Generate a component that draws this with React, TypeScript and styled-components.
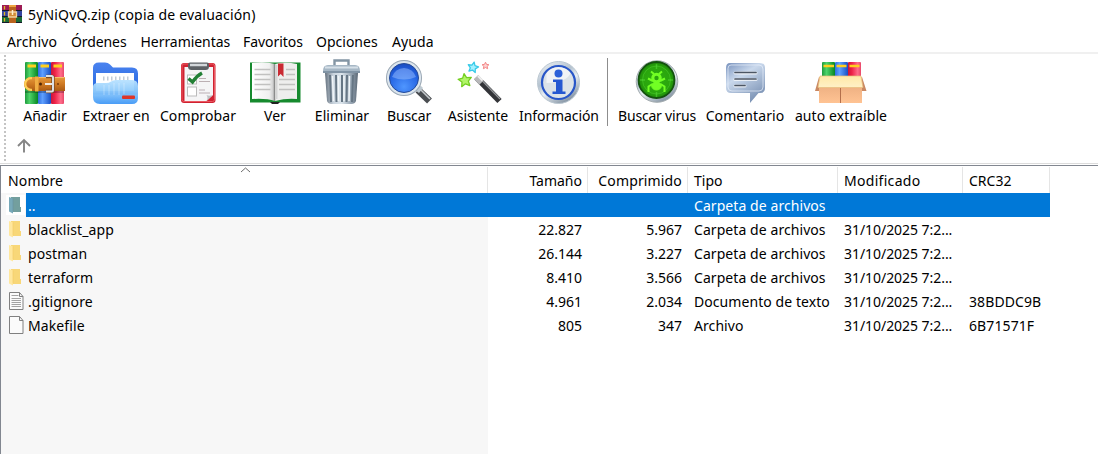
import React from 'react';
import styled, { createGlobalStyle } from 'styled-components';

const GlobalStyle = createGlobalStyle`
  * { box-sizing: border-box; }
  html, body { margin: 0; padding: 0; background: #fff; overflow: hidden; }
`;

const Window = styled.div`
  width: 1098px;
  height: 454px;
  display: flex;
  flex-direction: column;
  overflow: hidden;
  background: #fff;
  color: #000;
  font: 14px/20px 'Noto Sans', 'Open Sans', sans-serif;
  white-space: nowrap;
`;

const TitleBar = styled.header`
  flex: none;
  height: 30px;
  padding: 0 2px;
  display: flex;
  align-items: center;
  gap: 6px;
`;

const Title = styled.span`
  letter-spacing: 0.18px;
`;

const MenuBar = styled.nav`
  flex: none;
  height: 24px;
  padding: 2px 0 0 7px;
  display: flex;
  align-items: center;
  border-bottom: 2px solid #f0f0f0;
`;

const MenuItem = styled.span<{ $w: number; $track?: number }>`
  width: ${(p) => p.$w}px;
  letter-spacing: ${(p) => p.$track ?? 0}px;
`;

const ToolPanel = styled.div`
  flex: none;
  height: 109px;
  padding-left: 4px;
  display: flex;
`;

const Grip = styled.div`
  width: 2px;
  height: 107px;
  margin-top: 1px;
  background: repeating-linear-gradient(#c4c4c4 0 2px, #fff 2px 4px);
`;

const ToolRows = styled.div`
  display: flex;
  flex-direction: column;
  padding: 4px 0 0 6px;
`;

const ToolRow = styled.div`
  height: 70px;
  display: flex;
`;

const Tool = styled.div<{ $w: number; $track?: number }>`
  width: ${(p) => p.$w}px;
  display: flex;
  flex-direction: column;
  align-items: center;
  gap: 1px;
  padding-top: 1px;
  letter-spacing: ${(p) => p.$track ?? 0}px;
`;

const ToolIcon = styled.svg`
  width: 54px;
  height: 46px;
  flex: none;
  overflow: visible;
`;

const ToolSeparator = styled.div`
  width: 1px;
  height: 68px;
  margin: 0 4px 0 3px;
  background: #8d8d8d;
`;

const UpArrow = styled.svg`
  width: 16px;
  height: 16px;
  margin: 9px 0 0 4px;
`;

const ListPane = styled.main`
  flex: 1;
  display: flex;
  flex-direction: column;
  margin-top: 2px;
  border-top: 1px solid #828790;
  border-left: 1px solid #828790;
  box-shadow: 0 -1px 0 0 #fff, 0 -2px 0 0 #dcdcdc;
  background: linear-gradient(#f7f7f7, #f7f7f7) 0 27px / 487px 100% no-repeat;
`;

const columns = '486px 100px 100px 150px 125px 87px';

const HeadRow = styled.div`
  display: grid;
  grid-template-columns: ${columns};
  height: 27px;
  padding-top: 1px;
`;

const HeadCell = styled.div<{ $right?: boolean; $track?: number }>`
  position: relative;
  padding: ${(p) => (p.$right ? '4px 5px 0 0' : '4px 0 0 6px')};
  text-align: ${(p) => (p.$right ? 'right' : 'left')};
  border-right: 1px solid #e5e5e5;
  letter-spacing: ${(p) => p.$track ?? 0}px;
  &:first-child { width: 487px; padding-left: 7px; }
  &:nth-child(n + 2) { margin-left: 1px; margin-right: -1px; }
`;

const SortMark = styled.svg`
  position: absolute;
  top: 0;
  left: 239px;
  width: 11px;
  height: 6px;
`;

const Row = styled.div<{ $selected?: boolean }>`
  display: grid;
  grid-template-columns: ${columns};
  width: 1049px;
  height: 24px;
  align-items: center;
  color: ${(p) => (p.$selected ? '#fff' : '#000')};
  background: ${(p) =>
    p.$selected ? 'linear-gradient(#0078d7, #0078d7) 25px 0 no-repeat' : 'none'};
`;

const Cell = styled.span<{ $right?: boolean; $track?: number }>`
  height: 24px;
  padding: ${(p) => (p.$right ? '2px 6px 0 0' : '2px 0 0 7px')};
  margin-right: ${(p) => (p.$right ? -1 : 0)}px;
  text-align: ${(p) => (p.$right ? 'right' : 'left')};
  letter-spacing: ${(p) => p.$track ?? 0}px;
  line-height: 22px;
`;

const NameCell = styled.div`
  display: flex;
  align-items: center;
  gap: 3px;
  height: 24px;
  padding-left: 5px;
`;

const Name = styled.span`
  padding-top: 2px;
  letter-spacing: 0.1px;
`;

const FileIcon = styled.svg<{ $selected?: boolean }>`
  width: 19px;
  height: 20px;
  background: ${(p) => (p.$selected ? '#fff' : 'transparent')};
`;

const Gradients = () => (
  <defs>
    <linearGradient id="green"><stop offset="0" stopColor="#1e9a3c" /><stop offset=".35" stopColor="#4ed46a" /><stop offset="1" stopColor="#078522" /></linearGradient>
    <linearGradient id="blue"><stop offset="0" stopColor="#2f6ee0" /><stop offset=".35" stopColor="#5fa0ff" /><stop offset="1" stopColor="#174fc4" /></linearGradient>
    <linearGradient id="red"><stop offset="0" stopColor="#c9153a" /><stop offset=".3" stopColor="#ee2248" /><stop offset=".75" stopColor="#ff6d8a" /><stop offset="1" stopColor="#e84769" /></linearGradient>
    <linearGradient id="belt" x2="0" y2="1"><stop stopColor="#e69a3c" /><stop offset=".5" stopColor="#cf7a22" /><stop offset="1" stopColor="#ab5a12" /></linearGradient>
    <linearGradient id="folderBack" x2="0" y2="1"><stop stopColor="#4a83f0" /><stop offset="1" stopColor="#2465dc" /></linearGradient>
    <linearGradient id="folderFront" x2="0" y2="1"><stop stopColor="#b9e2ff" /><stop offset=".5" stopColor="#8ac8fb" /><stop offset="1" stopColor="#3f97f6" /></linearGradient>
    <linearGradient id="metal"><stop stopColor="#66727f" /><stop offset=".25" stopColor="#c8d3dd" /><stop offset=".5" stopColor="#dce5ec" /><stop offset=".8" stopColor="#94a3b1" /><stop offset="1" stopColor="#5b6875" /></linearGradient>
    <linearGradient id="silver" x2=".6" y2="1"><stop stopColor="#f4f8fb" /><stop offset=".45" stopColor="#b4c2cf" /><stop offset=".65" stopColor="#e9eff4" /><stop offset="1" stopColor="#8998a7" /></linearGradient>
    <linearGradient id="page" x2="1"><stop stopColor="#fff" /><stop offset=".75" stopColor="#f0f0f0" /><stop offset="1" stopColor="#bdbdbd" /></linearGradient>
    <radialGradient id="lens" cx=".5" cy=".75" r=".75"><stop stopColor="#4f96ff" /><stop offset=".6" stopColor="#2463e2" /><stop offset="1" stopColor="#1743b2" /></radialGradient>
    <linearGradient id="bubble" x2=".6" y2="1"><stop stopColor="#7892bd" /><stop offset=".4" stopColor="#c9d8ec" /><stop offset="1" stopColor="#7c93b5" /></linearGradient>
    <radialGradient id="radar"><stop stopColor="#2cb010" /><stop offset=".75" stopColor="#2aa50d" /><stop offset="1" stopColor="#1c8a08" /></radialGradient>
    <linearGradient id="flap" x2="0" y2="1"><stop stopColor="#ffe9a8" /><stop offset="1" stopColor="#fff0c6" /></linearGradient>
    <linearGradient id="carton" x2="0" y2="1"><stop stopColor="#e5a679" /><stop offset="1" stopColor="#ffc393" /></linearGradient>
  </defs>
);

const starPath = (cx: number, cy: number, r: number, turn = 0) =>
  Array.from({ length: 10 }, (_, i) => {
    const a = ((i * 36 - 90 + turn) * Math.PI) / 180;
    const d = i % 2 ? r * 0.48 : r;
    return `${i ? 'L' : 'M'}${(cx + d * Math.cos(a)).toFixed(2)} ${(cy + d * Math.sin(a)).toFixed(2)}`;
  }).join('') + 'Z';

const AddIcon = () => (
  <ToolIcon viewBox="0 0 54 46">
    <Gradients />
    <rect x="7" y="3" width="13" height="42" rx="1" fill="url(#green)" />
    <rect x="20" y="3" width="13" height="42" rx="1" fill="url(#blue)" />
    <rect x="33" y="3" width="13" height="42" rx="1" fill="url(#red)" />
    <path d="M9.500 7h8.500M22.500 7h8.500M35.500 7h8.500" stroke="#ffcf1e" strokeWidth="2.800" />
    <path d="M7 33h39" stroke="#000" strokeOpacity=".25" strokeWidth="2" />
    <path d="M13 18h34v14H13a7 7 0 0 1 0-14z" fill="url(#belt)" />
    <path d="M17 17.500h3.500v15H17z" fill="#f0ad42" />
    <path d="M14 19.200h-1a5.800 5.800 0 0 0 0 11.600h1" fill="none" stroke="#ffcf55" strokeWidth="2.200" />
    <path d="M21 18.500h7M37 18.500h9.500" stroke="#f8bc6b" strokeWidth="1" />
    <path d="M29 17.500h6q1 0 1 1v13q0 1-1 1h-6" transform="translate(-1)" fill="none" stroke="#7b4a24" strokeWidth="3.400" />
    <path d="M28 17h5.500q1.500 0 1.500 1.500v12.500q0 1.500-1.500 1.500H28" fill="none" stroke="#dcdfe2" strokeWidth="2" />
    <path d="M27 25h7" stroke="#f5f5f5" strokeWidth="1.800" />
    <circle cx="22.500" cy="25" r="1.500" fill="#512704" /><circle cx="40" cy="25" r="1" fill="#793a08" />
  </ToolIcon>
);

const ExtractIcon = () => (
  <ToolIcon viewBox="0 0 54 46">
    <path d="M4 9q0-5.500 6-5.500h6q3 0 5 2l3 3h19q6 0 6 6v21H4z" fill="url(#folderBack)" />
    <path d="M7 14h38v18H7z" fill="#fff" />
    <path d="M14 19.500h27" stroke="#c3ccd5" strokeWidth="4" strokeDasharray="1.500 2.500" />
    <path d="M4 28q0-4 5-4h8q3 0 5-1.500t5-1.500h16q6 0 6 6v12q0 6-6 6H11q-7 0-7-7z" fill="url(#folderFront)" fillOpacity=".95" />
    <path d="M15 26v10M20 26v10M25 24v12M30 24v12M35 24v11" stroke="#fff" strokeOpacity=".22" strokeWidth="1.500" />
    <rect x="33" y="36.500" width="13" height="3.500" rx="1" fill="#dd3528" />
  </ToolIcon>
);

const TestIcon = () => (
  <ToolIcon viewBox="0 0 54 46">
    <rect x="10" y="4" width="34.500" height="40" rx="3" fill="#cf2231" />
    <rect x="11" y="5" width="32.500" height="37.500" rx="2" fill="none" stroke="#eb5962" />
    <path d="M13.500 8H42v28l-6.500 6h-22z" fill="#f5f5f6" />
    <path d="M35.500 42q2-3 0-6 3 1.500 6.500 0z" fill="#bfc1c4" />
    <path d="M17 5.500q0-2 2-2h17q2 0 2 2v2q0 3.500-3.500 3.500h-14q-3.500 0-3.500-3.500z" fill="#5d6165" />
    <path d="M19 6h17" stroke="#d3d7da" strokeWidth="2.500" />
    <rect x="16.500" y="16" width="9" height="9" fill="#fff" stroke="#bbb" />
    <rect x="16.500" y="28" width="9" height="9" fill="#fff" stroke="#bbb" />
    <path d="M28 19.500h7M28 22.500h11M28 31h6M28 34h11" stroke="#bcb0b3" strokeWidth="1.200" />
    <path d="m17.500 19.500 4 3.500q4-6 9.500-9" fill="none" stroke="#238036" strokeWidth="3.300" />
  </ToolIcon>
);

const ViewIcon = () => (
  <ToolIcon viewBox="0 0 54 46">
    <path d="M2 3.500h50.500v40H31q-3 2-7 0H2z" fill="#168a2e" />
    <path d="M22 43h10l-2 2h-6z" fill="#222" />
    <path d="M4 4q13-2 23 1v37q-9-3-23-2z" fill="url(#page)" />
    <path d="M49 5q-12-2.500-22 0v37q11-3 22-2z" fill="#eeeeed" />
    <path d="M26.500 5v37" stroke="#8b8b8b" strokeWidth="1.500" /><path d="M28.500 6v34" stroke="#d4d4d4" strokeWidth="2" />
    <path d="M6.500 10.500h16M6.500 15.500h16M6.500 20.500h16M6.500 25.500h16M6.500 30.500h16M31 20.500h16M31 25.500h16M31 30.500h16M38 10.500h9M38 15.500h9" stroke="#c1c1c0" strokeWidth="1.300" />
    <path d="M30 4.500h5.500v13.500L32.700 15 30 17.500z" fill="#c92a33" />
  </ToolIcon>
);

const DeleteIcon = () => (
  <ToolIcon viewBox="0 0 54 46">
    <path d="M19.500 7V1.500h14V7" fill="none" stroke="#8395a4" strokeWidth="2.400" />
    <path d="M10 14h33l-2 28q-1 3-5 3H17q-4 0-5-3z" fill="url(#metal)" />
    <path d="M15 16l1 27M21 16l.5 27M27 16v27M32 16l-.5 27M38 16l-1 27" stroke="#667684" strokeWidth="2" />
    <path d="M17.500 17l1 25M23.500 17v25M29 17v25M34.500 17l-.5 25" stroke="#f0f5f8" strokeWidth="1.500" />
    <path d="M8 12q0-6 5-6h27q5 0 5 6v2H8z" fill="#a6b7c5" /><path d="M10 8.500h33" stroke="#d5e0e8" strokeWidth="2" />
    <path d="M8 13h37" stroke="#74889a" strokeWidth="1.500" />
  </ToolIcon>
);

const FindIcon = () => (
  <ToolIcon viewBox="0 0 54 46">
    <path d="m36 31 11.500 11" stroke="#4a4d51" strokeWidth="7" /><path d="m38 30 10 10" stroke="#c5c9cc" strokeWidth="1.600" />
    <path d="m33 31 5-5 3 3-4 5z" fill="#bec9d1" />
    <circle cx="22" cy="19" r="17.300" fill="url(#lens)" stroke="#9aa7b3" strokeWidth="1.500" />
    <circle cx="22" cy="19" r="15.800" fill="none" stroke="#dce5ec" strokeWidth="2.600" />
    <circle cx="22" cy="19" r="14.500" fill="none" stroke="#244a98" />
    <path d="M10 18a12.500 12.500 0 0 1 24 0q-12 5-24 0z" fill="#a3c6ff" fillOpacity=".45" />
  </ToolIcon>
);

const WizardIcon = () => (
  <ToolIcon viewBox="0 0 54 46">
    <path d="m25.500 18.500 23 23.500" stroke="#333438" strokeWidth="6" />
    <path d="m27 17.500 22 22.500" stroke="#96989b" strokeWidth="1.200" />
    <path d="m25 18 5.500 5.700" stroke="#b8b8ba" strokeWidth="6" /><path d="m27 17 4.500 4.500" stroke="#efefef" strokeWidth="2" />
    <path d={starPath(14, 21.5, 7, -8)} fill="#b0f568" stroke="#74ce21" strokeWidth="1.3" strokeLinejoin="round" />
    <path d={starPath(22, 8.5, 5.5, 12)} fill="#a4f1ff" stroke="#37cae8" strokeWidth="1.3" strokeLinejoin="round" />
    <path d={starPath(34.5, 6.8, 3.6)} fill="#fcd1d1" stroke="#f38686" strokeLinejoin="round" />
  </ToolIcon>
);

const InfoIcon = () => (
  <ToolIcon viewBox="0 0 54 46">
    <circle cx="26.500" cy="23.500" r="21" fill="url(#silver)" stroke="#bbc7d1" />
    <circle cx="26.500" cy="23.500" r="16.500" fill="#dbe2e8" stroke="#2856c8" strokeWidth="2.200" />
    <path d="M14.500 14a15 15 0 0 1 24 0q-3 9-24 10z" fill="#fff" fillOpacity=".6" />
    <circle cx="26.500" cy="14.500" r="4" fill="#2c60d8" />
    <path d="M21 20.500h9.500v12h3V35H20.500v-2.500H24V23h-3z" fill="#2457d1" />
  </ToolIcon>
);

const VirusIcon = () => (
  <ToolIcon viewBox="0 0 54 46">
    <circle cx="27" cy="22.500" r="20.800" fill="url(#silver)" stroke="#a5adb0" />
    <circle cx="26.500" cy="21" r="18" fill="url(#radar)" stroke="#14520f" strokeWidth="1.800" />
    <g fill="none" stroke="#5be23e" strokeOpacity=".5">
      <circle cx="26.500" cy="21" r="14" strokeOpacity=".35" /><path d="M26.500 5v5M26.500 33v5M10 21h5M38 21h5" strokeWidth="1.500" />
    </g>
    <g fill="#72ff24" stroke="#72ff24">
      <circle cx="26.500" cy="19" r="4.500" strokeWidth="1.500" />
      <ellipse cx="26.500" cy="27" rx="4.800" ry="4" />
      <path d="m21 12.500 3 2.500M32 12.500 29 15M23 22l-5-2.500M30 22l5-2.500M22.500 25 18.500 27.500v5.500M30.500 25l4 2.500v5.500" fill="none" strokeWidth="2" />
    </g>
    <circle cx="26.500" cy="19" r="2.200" fill="#2ba50e" />
  </ToolIcon>
);

const CommentIcon = () => (
  <ToolIcon viewBox="0 0 54 46">
    <path d="M12 4h30q5 0 5 5v20q0 5-5 5h-1.500L32 44V34H13q-5 0-5-5V9q0-5 4-5z" fill="url(#bubble)" />
    <path d="M13 6h28q4 0 4 4v18q0 4-4 4H14q-4 0-4-4V9.500Q10 6 13 6z" fill="none" stroke="#e8f0fb" strokeOpacity=".7" />
    <path d="M17 14h21M17 20.500h21M17 27h10" stroke="#fff" strokeOpacity=".7" strokeWidth="3" strokeLinecap="round" />
    <path d="M17 13.500h21M17 20h21M17 26.500h10" stroke="#4c5664" strokeWidth="1.700" strokeLinecap="round" />
  </ToolIcon>
);

const SfxIcon = () => (
  <ToolIcon viewBox="0 0 54 46">
    <rect x="8" y="3" width="13" height="20" rx="1" fill="url(#green)" /><rect x="21" y="3" width="13" height="20" rx="1" fill="url(#blue)" /><rect x="34" y="3" width="13" height="20" rx="1" fill="url(#red)" />
    <path d="M9.500 7h10.500M22.500 7h10M35.500 7h10" stroke="#ffcf1e" strokeWidth="2.600" />
    <path d="M5 18h43v26H5z" fill="url(#carton)" />
    <path d="M5 18 1 32h4zM48 18l4.500 14H48z" fill="#c98862" />
    <path d="M6 17h41l2 11.500H4z" fill="url(#flap)" stroke="#e7bd7b" strokeWidth=".7" />
    <path d="M26.500 29v15" stroke="#b46f4b" />
  </ToolIcon>
);

const AppIcon = styled.svg`
  width: 20px;
  height: 18px;
  margin-top: -2px;
`;

const tools: Array<[string, number, React.FC, number]> = [
  ['Añadir', 66, AddIcon, 0],
  ['Extraer en', 76, ExtractIcon, -0.05],
  ['Comprobar', 88, TestIcon, 0.1],
  ['Ver', 66, ViewIcon, 0],
  ['Eliminar', 68, DeleteIcon, 0.05],
  ['Buscar', 66, FindIcon, -0.1],
  ['Asistente', 72, WizardIcon, 0],
  ['Información', 90, InfoIcon, -0.1],
  ['Buscar virus', 90, VirusIcon, -0.2],
  ['Comentario', 86, CommentIcon, 0.1],
  ['auto extraíble', 106, SfxIcon, 0.1],
];

const menus: Array<[string, number, number]> = [
  ['Archivo', 64, 0.15],
  ['Órdenes', 69.5, -0.1],
  ['Herramientas', 102.5, -0.05],
  ['Favoritos', 73, -0.05],
  ['Opciones', 76, 0],
  ['Ayuda', 50, 0.1],
];

type Kind = 'up' | 'folder' | 'text' | 'file';
const files: Array<{ kind: Kind; name: string; size: string; packed: string; type: string; date: string; crc: string }> = [
  { kind: 'up', name: '..', size: '', packed: '', type: 'Carpeta de archivos', date: '', crc: '' },
  { kind: 'folder', name: 'blacklist_app', size: '22.827', packed: '5.967', type: 'Carpeta de archivos', date: '31/10/2025 7:2...', crc: '' },
  { kind: 'folder', name: 'postman', size: '26.144', packed: '3.227', type: 'Carpeta de archivos', date: '31/10/2025 7:2...', crc: '' },
  { kind: 'folder', name: 'terraform', size: '8.410', packed: '3.566', type: 'Carpeta de archivos', date: '31/10/2025 7:2...', crc: '' },
  { kind: 'text', name: '.gitignore', size: '4.961', packed: '2.034', type: 'Documento de texto', date: '31/10/2025 7:2...', crc: '38BDDC9B' },
  { kind: 'file', name: 'Makefile', size: '805', packed: '347', type: 'Archivo', date: '31/10/2025 7:2...', crc: '6B71571F' },
];

const EntryIcon = ({ kind }: { kind: Kind }) => {
  if (kind === 'text' || kind === 'file') {
    return (
      <FileIcon viewBox="0 0 19 20">
        <path d="M3.500 1.500h10l3.500 4v13H3.500z" fill="#fbfbfb" stroke="#808080" />
        <path d="M13.500 1.500v4H17" fill="none" stroke="#808080" />
        {kind === 'text' && <path d="M5.500 4.500h7M5.500 7.500h9.500M5.500 9.500h9.500M5.500 11.500h9.500M5.500 13.500h9.500M5.500 15.500h9.500" stroke="#a3a3a3" />}
      </FileIcon>
    );
  }
  const up = kind === 'up';
  return (
    <FileIcon viewBox="0 0 19 20" $selected={up}>
      <path d="M5 2h9v10h1v5H5z" fill={up ? '#739f9e' : '#f8d778'} />
      <path d="M3 2l4 1.500V18.500L3 16.500z" fill={up ? '#77a9b9' : '#ffe79d'} />
      <path d="M7 3.500v13" stroke={up ? '#6794a0' : '#f3cc69'} strokeWidth=".7" />
    </FileIcon>
  );
};

export default function App() {
  return (
    <Window>
      <GlobalStyle />
      <TitleBar>
        <AppIcon viewBox="0 0 20 18">
          <path d="M0 0h20v6H0z" fill="#9d1b54" /><path d="M0 6h20v6H0z" fill="#34449e" /><path d="M0 12h20v6H0z" fill="#1b6b36" />
          <path d="M0 5.500h20M0 11.500h20M0 17.500h20" stroke="#161a2c" />
          <path d="M2.500 1v3.500M2.500 7v3.500M2.500 13v3.500" stroke="#e2b922" strokeWidth="1.300" />
          <path d="M7 0h7v18H7z" fill="#b9631e" /><path d="M7 1h7" stroke="#eca33f" strokeWidth="2" />
          <path d="M6.500 7h8v5h-8z" fill="#d28b36" stroke="#f1d3a0" strokeWidth="1.300" /><path d="M10.500 5v5" stroke="#fff0cf" strokeWidth="1.500" />
        </AppIcon>
        <Title>5yNiQvQ.zip (copia de evaluación)</Title>
      </TitleBar>
      <MenuBar>
        {menus.map(([label, w, t]) => <MenuItem key={label} $w={w} $track={t}>{label}</MenuItem>)}
      </MenuBar>
      <ToolPanel>
        <Grip />
        <ToolRows>
          <ToolRow>
            {tools.map(([label, w, Icon, t], i) => (
              <React.Fragment key={label}>
                {i === 8 && <ToolSeparator />}
                <Tool $w={w} $track={t}><Icon />{label}</Tool>
              </React.Fragment>
            ))}
          </ToolRow>
          <UpArrow viewBox="0 0 16 16">
            <path d="M8 15.500V3M2 9l6-6 6 6" fill="none" stroke="#858585" strokeWidth="1.900" />
          </UpArrow>
        </ToolRows>
      </ToolPanel>
      <ListPane>
        <HeadRow>
          <HeadCell $track={0.15}>
            Nombre
            <SortMark viewBox="0 0 11 6"><path d="m1 5 4.500-4L10 5" fill="none" stroke="#6d6d6d" /></SortMark>
          </HeadCell>
          <HeadCell $right>Tamaño</HeadCell>
          <HeadCell $right $track={0.15}>Comprimido</HeadCell>
          <HeadCell>Tipo</HeadCell>
          <HeadCell $track={0.3}>Modificado</HeadCell>
          <HeadCell>CRC32</HeadCell>
        </HeadRow>
        {files.map((f) => (
          <Row key={f.name} $selected={f.kind === 'up'}>
            <NameCell><EntryIcon kind={f.kind} /><Name>{f.name}</Name></NameCell>
            <Cell $right>{f.size}</Cell>
            <Cell $right>{f.packed}</Cell>
            <Cell $track={0.07}>{f.type}</Cell>
            <Cell $track={-0.05}>{f.date}</Cell>
            <Cell $track={0.1}>{f.crc}</Cell>
          </Row>
        ))}
      </ListPane>
    </Window>
  );
}
